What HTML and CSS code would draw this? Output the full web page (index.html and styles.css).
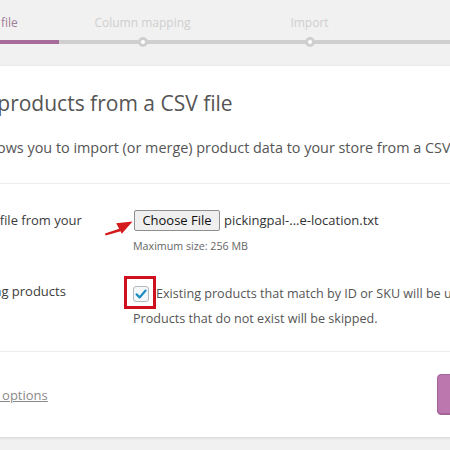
FILE: index.html
```html
<!DOCTYPE html>
<html lang="en">
<head>
<meta charset="utf-8">
<title>Import products</title>
<link rel="stylesheet" href="styles.css">
</head>
<body>
<div class="page">
  <ol class="steps">
    <li class="step active">Upload CSV file</li>
    <li class="step">Column mapping</li>
    <li class="step">Import</li>
    <li class="step">Done!</li>
  </ol>

  <div class="card">
    <header class="card-header">
      <h2 class="title">Import products from a CSV file</h2>
      <p class="intro">This tool allows you to import (or merge) product data to your store from a CSV file.</p>
    </header>

    <section class="card-body">
      <div class="row row-file">
        <div class="label">Choose a CSV file from your<br>computer:</div>
        <div class="field">
          <svg class="arrow" width="30" height="20" viewBox="0 0 30 20" aria-hidden="true">
            <path d="M0 17.5 L15 12.5 L15.6 15.2 L0.6 19.6 Z" fill="#d41a1a"/>
            <path d="M11.2 7.2 L27.5 5.4 L16.8 17.8 Z" fill="#d41a1a"/>
          </svg>
          <div class="file-line">
            <button class="file-btn" type="button">Choose File</button>
            <span class="file-name">pickingpal-...e-location.txt</span>
          </div>
          <div class="hint">Maximum size: 256 MB</div>
        </div>
      </div>

      <div class="row row-update">
        <div class="label">Update existing products</div>
        <div class="field">
          <div class="check-line">
            <span class="checkbox">
              <svg width="14" height="14" viewBox="0 0 14 14" aria-hidden="true">
                <path d="M2.6 7.4 L5.6 10.4 L11.6 3.6" fill="none" stroke="#1e8cbe" stroke-width="2.2" stroke-linecap="round" stroke-linejoin="round"/>
              </svg>
              <span class="highlight"></span>
            </span>
            <span class="check-text">Existing products that match by ID or SKU will be updated.</span>
          </div>
          <div class="check-text second">Products that do not exist will be skipped.</div>
        </div>
      </div>
    </section>

    <footer class="card-footer">
      <a class="adv-link" href="#">Show advanced options</a>
      <button class="primary" type="button">Continue</button>
    </footer>
  </div>
</div>
</body>
</html>
```

FILE: styles.css
```css
html, body {
  margin: 0;
  padding: 0;
}

body {
  background: #f1f1f1;
  font-family: "Open Sans", "Noto Sans", sans-serif;
  color: #444;
  overflow: hidden;
  width: 450px;
  height: 450px;
}

.page {
  margin-left: -120px;
  width: 720px;
}

/* progress steps */
.steps {
  list-style: none;
  margin: 0 0 0 12px;
  padding: 0;
  display: flex;
}

.step {
  position: relative;
  width: 167px;
  flex: none;
  text-align: center;
  font-size: 12px;
  line-height: 16px;
  padding: 15px 0 9px;
  color: #cfcfcf;
  border-bottom: 4px solid #cfcfcf;
}

.step::before {
  content: "";
  position: absolute;
  left: 50%;
  bottom: -7px;
  margin-left: -5px;
  width: 4px;
  height: 4px;
  border: 3px solid #cfcfcf;
  border-radius: 50%;
  background: #fff;
}

.step.active {
  color: #a17e99;
  border-bottom-color: #a66a9b;
}

.step.active::before {
  border-color: #a66a9b;
}

/* card */
.card {
  margin-top: 22px;
  background: #fff;
  box-shadow: 0 1px 3px rgba(0, 0, 0, 0.12);
}

.card-header {
  padding: 23px 0 24px 45px;
  border-bottom: 1px solid #ececec;
}

.title {
  margin: 0;
  font-size: 21px;
  line-height: 28px;
  font-weight: 400;
  color: #555;
}

.intro {
  margin: 20px 0 0 -4px;
  font-size: 14.4px;
  line-height: 22px;
  color: #555;
  white-space: nowrap;
}

.card-body {
  padding: 0 0 20px 34px;
}

.row {
  display: grid;
  grid-template-columns: 219px 1fr;
}

.row-file {
  padding-top: 26px;
}

.row-update {
  padding-top: 27px;
}

.label {
  font-size: 13px;
  line-height: 20px;
  color: #3c3c3c;
}

.field {
  position: relative;
}

.arrow {
  position: absolute;
  left: -28px;
  top: 6px;
}

.file-line {
  display: flex;
  align-items: center;
  height: 20px;
}

.file-btn {
  box-sizing: border-box;
  height: 21px;
  width: 86px;
  margin: 0 0 0 1px;
  padding: 0;
  font-family: "Open Sans", "Noto Sans", sans-serif;
  font-size: 13px;
  line-height: 18px;
  color: #111;
  background: #efefef;
  border: 1px solid #8f8f8f;
  border-radius: 2px;
}

.file-name {
  margin-left: 4px;
  font-size: 13px;
  color: #333;
  white-space: nowrap;
}

.hint {
  margin-top: 8px;
  font-size: 10.7px;
  line-height: 16px;
  color: #666;
}

.check-line {
  display: flex;
  align-items: center;
  height: 25px;
  white-space: nowrap;
}

.checkbox {
  position: relative;
  box-sizing: border-box;
  flex: none;
  width: 16px;
  height: 16px;
  margin-right: 7px;
  border: 1px solid #b4b9be;
  border-radius: 3px;
  background: #f4f8fb;
  display: flex;
  align-items: center;
  justify-content: center;
}

.highlight {
  position: absolute;
  left: -10px;
  top: -11px;
  width: 26px;
  height: 27px;
  border: 3px solid #cf1020;
}

.check-text {
  font-size: 12.6px;
  line-height: 25px;
  color: #555;
  white-space: nowrap;
}

.card-footer {
  display: flex;
  justify-content: space-between;
  align-items: center;
  padding: 22px 24px 22px 24px;
  border-top: 1px solid #ececec;
}

.adv-link {
  font-size: 13px;
  color: #8a8a8a;
  text-decoration: underline;
}

.primary {
  width: 139px;
  height: 41px;
  padding: 0;
  font-family: "Open Sans", "Noto Sans", sans-serif;
  font-size: 14px;
  color: #fff;
  background: #bb77ae;
  border: 1px solid #a36597;
  border-radius: 4px;
  box-shadow: inset 0 -1px 0 #a36597;
}
```
